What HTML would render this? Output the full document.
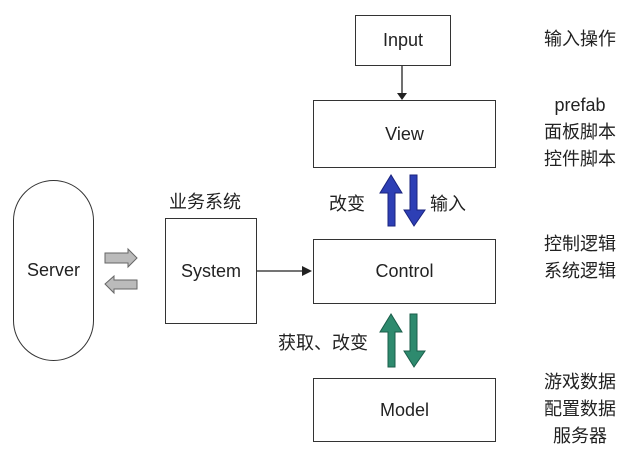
<!DOCTYPE html>
<html><head><meta charset="utf-8"><style>
body{margin:0;width:642px;height:455px;background:#fff;position:relative;overflow:hidden;font-family:"Liberation Sans","Noto Sans CJK SC",sans-serif;color:#222}
.b{position:absolute;border:1.5px solid #333;box-sizing:border-box;display:flex;align-items:center;justify-content:center;font-size:18px;background:#fff}
.t{position:absolute;font-size:18px;white-space:nowrap}
.r{position:absolute;left:530px;width:100px;text-align:center;font-size:18px;line-height:27px}
</style></head><body>
<div class="b" style="left:355px;top:15px;width:96px;height:51px">Input</div>
<div class="b" style="left:313px;top:100px;width:183px;height:68px">View</div>
<div class="b" style="left:313px;top:239px;width:183px;height:65px">Control</div>
<div class="b" style="left:313px;top:378px;width:183px;height:64px">Model</div>
<div class="b" style="left:165px;top:218px;width:92px;height:106px">System</div>
<div class="b" style="left:13px;top:180px;width:81px;height:181px;border-radius:41px">Server</div>
<div class="t" style="left:169px;top:188px">业务系统</div>
<div class="t" style="left:329px;top:190px">改变</div>
<div class="t" style="left:430px;top:190px">输入</div>
<div class="t" style="left:278px;top:329px">获取、改变</div>
<div class="r" style="top:26px">输入操作</div>
<div class="r" style="top:92px">prefab<br>面板脚本<br>控件脚本</div>
<div class="r" style="top:231px">控制逻辑<br>系统逻辑</div>
<div class="r" style="top:369px">游戏数据<br>配置数据<br>服务器</div>
<svg width="642" height="455" style="position:absolute;left:0;top:0">
<line x1="402" y1="66" x2="402" y2="94" stroke="#222" stroke-width="1.3"/><polygon points="397,93 407,93 402,100" fill="#222"/>
<line x1="257" y1="271" x2="303" y2="271" stroke="#222" stroke-width="1.3"/><polygon points="302,266 302,276 312,271" fill="#222"/>
<g fill="#2d3fb5" stroke="#1a237e" stroke-width="1">
<polygon points="391,175 380,193 388,193 388,226 395,226 395,193 402,193"/>
<polygon points="410,175 417,175 417,210 425,210 414,226 404,210 410,210"/>
</g>
<g fill="#2e8a6e" stroke="#1b5e4a" stroke-width="1">
<polygon points="391,314 380,332 388,332 388,367 395,367 395,332 402,332"/>
<polygon points="410,314 417,314 417,351 425,351 414,367 404,351 410,351"/>
</g>
<g fill="#bbb" stroke="#666" stroke-width="1">
<polygon points="105,253 128,253 128,249 137,258 128,267 128,263 105,263"/>
<polygon points="137,280 114,280 114,276 105,284 114,293 114,289 137,289"/>
</g>
</svg>
</body></html>
